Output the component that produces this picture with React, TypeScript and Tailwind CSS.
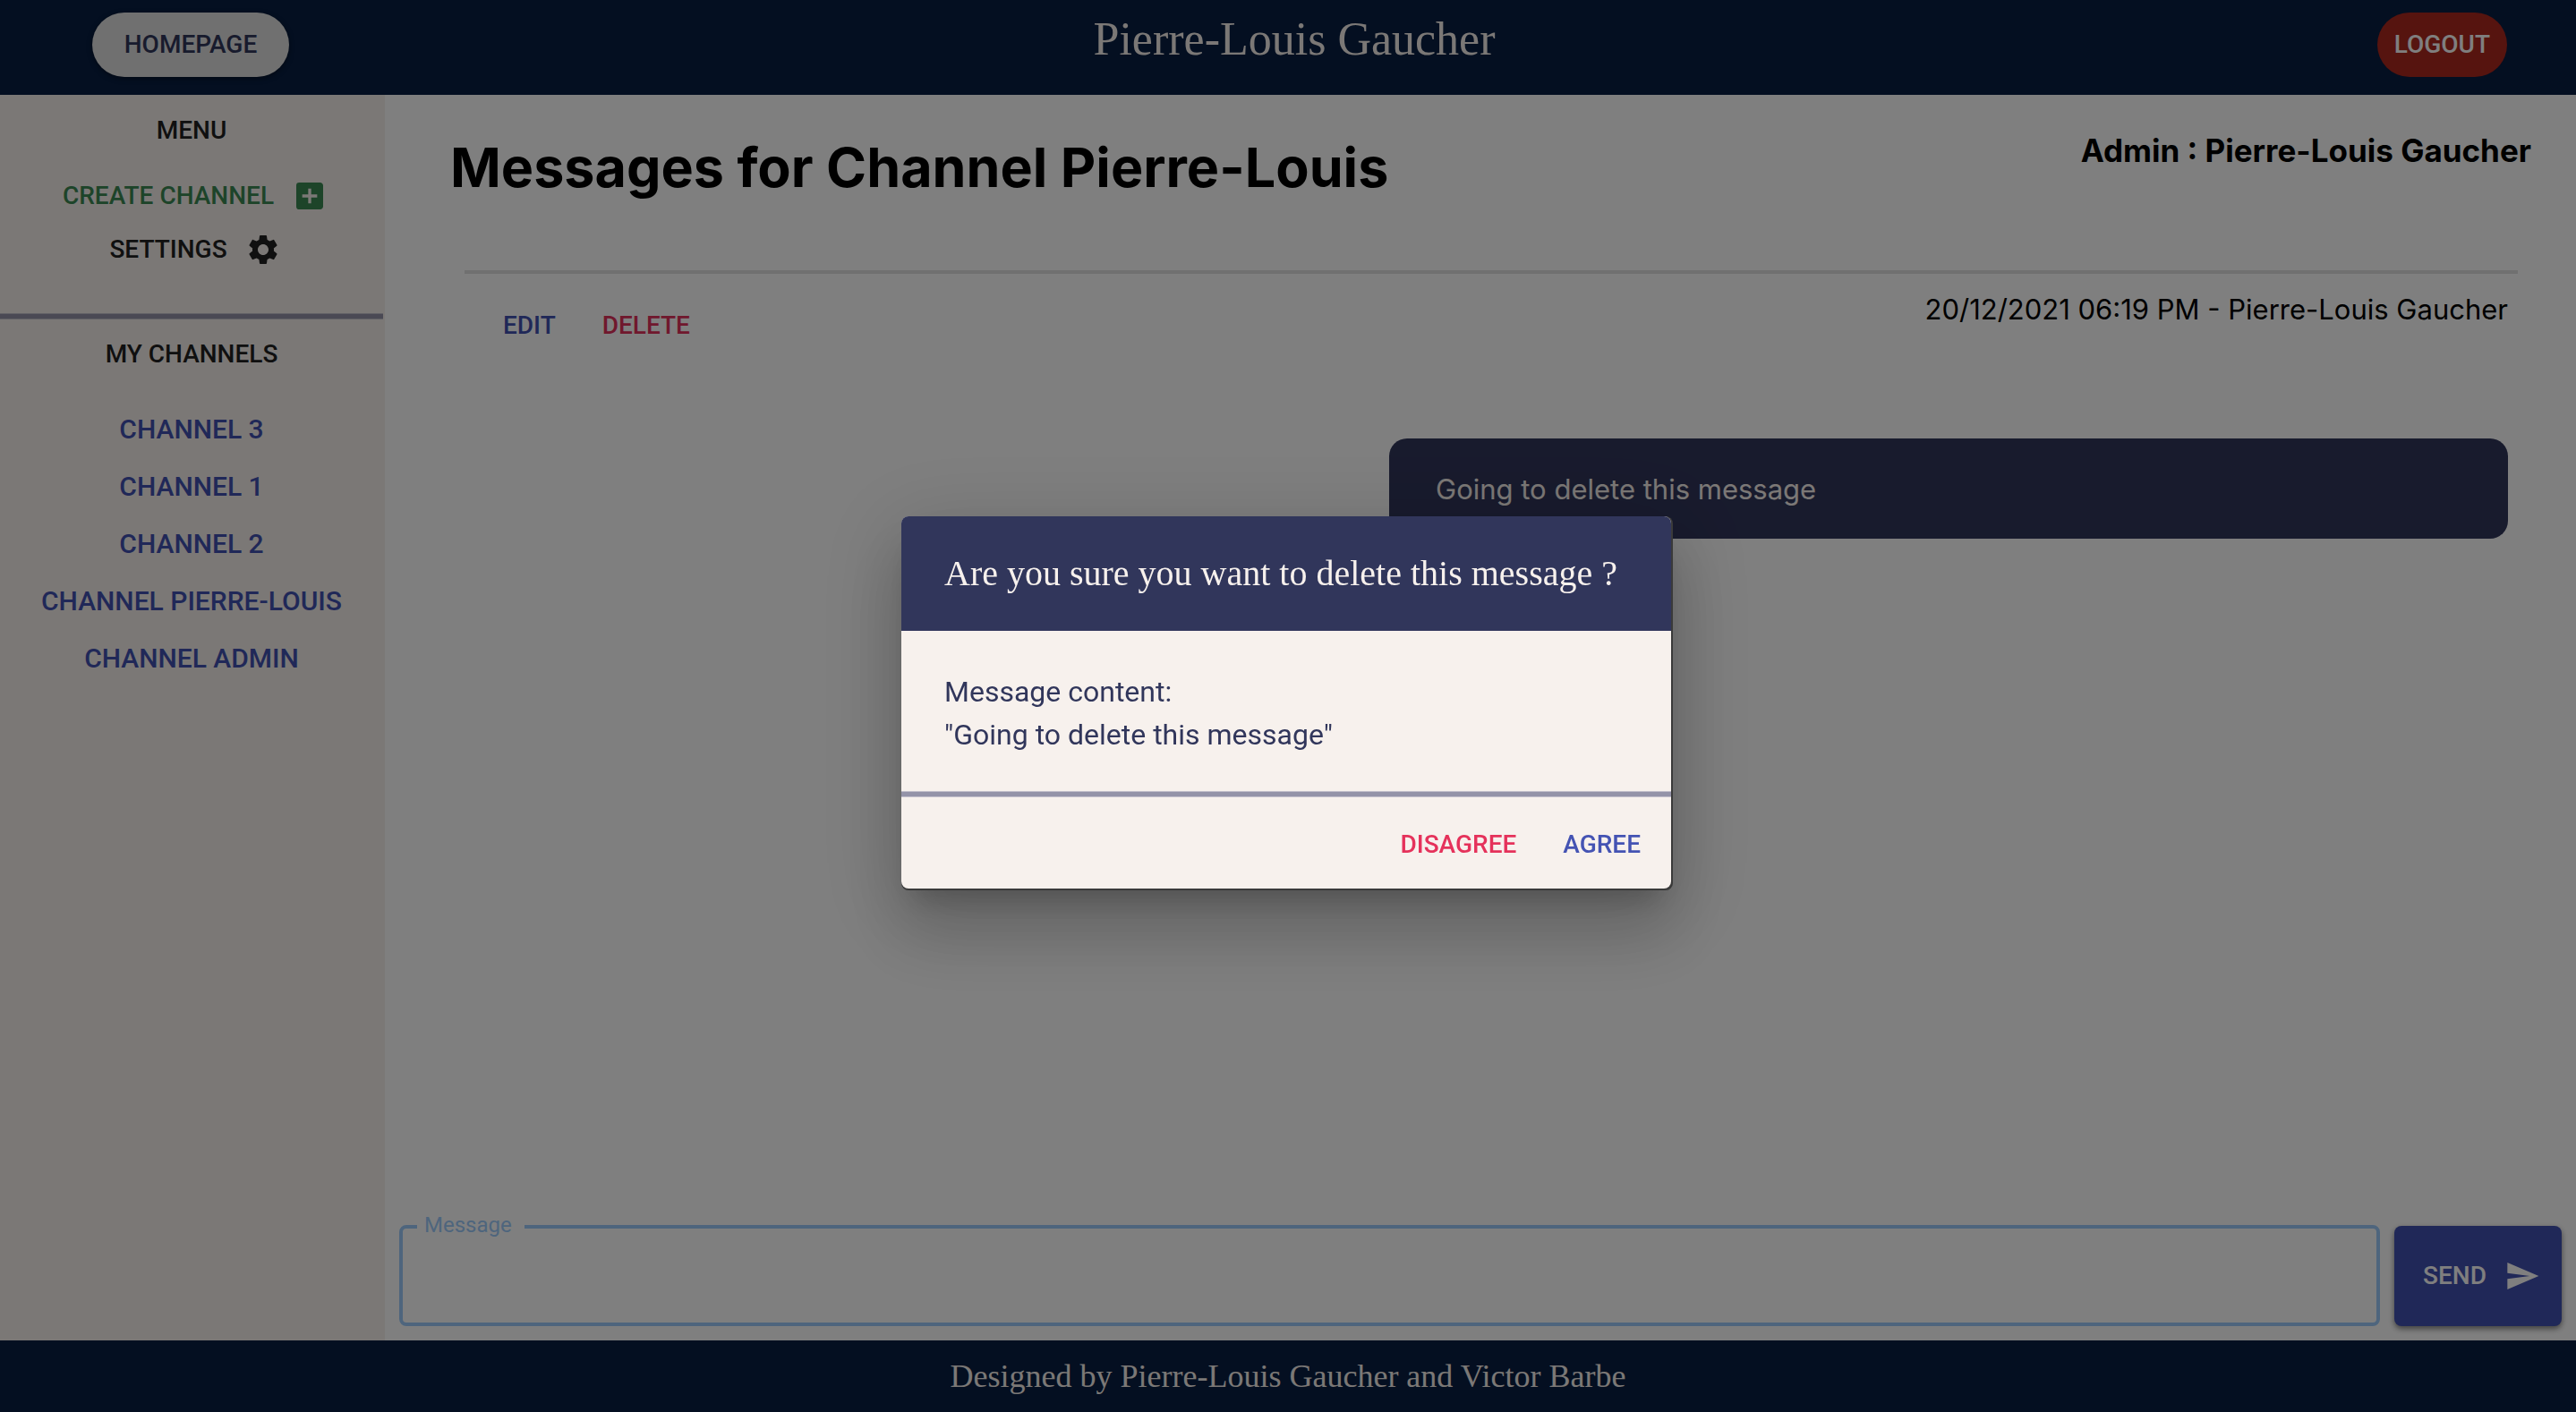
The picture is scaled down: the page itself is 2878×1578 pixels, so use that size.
import React from "react";
import { MdAddBox, MdSend, MdSettings } from "react-icons/md";

const channels = ["Channel 3", "Channel 1", "Channel 2", "Channel Pierre-Louis", "Channel Admin"];

const buttonText = "font-['Roboto',sans-serif] text-[28px] leading-[48px] font-medium uppercase";

function Rule() {
  return <hr className="h-[7px] w-full border-y border-[#c3c0cb] bg-[#9493a8]" />;
}

function Header() {
  return (
    <header className="flex h-[106px] shrink-0 items-start bg-[#081e42]">
      <div className="flex w-[426px] justify-center pt-3.5">
        <button
          type="button"
          className={`${buttonText} rounded-full bg-[#e0e0e0] px-9 py-3 text-[#31365b] shadow-[0_2px_6px_rgba(0,0,0,0.4)]`}
        >
          Homepage
        </button>
      </div>
      <h1 className="flex-1 pt-3.5 text-center font-['Liberation_Serif',serif] text-[52px] leading-[60px] text-[#f7f1ed]">
        Pierre-Louis Gaucher
      </h1>
      <div className="flex w-[412px] justify-end pt-3.5 pr-[77px]">
        <button type="button" className={`${buttonText} rounded-full bg-[#ac281e] px-[19px] py-3 text-white`}>
          Logout
        </button>
      </div>
    </header>
  );
}

function Sidebar() {
  return (
    <aside className="flex w-[430px] shrink-0 flex-col items-center border-r-2 border-[#f7f1ed] bg-[#f7f1ed] text-[#212121]">
      <h2 className={`${buttonText} pt-4 pb-3.5`}>Menu</h2>
      <div className="flex flex-col items-center pt-[5px] pb-[41px]">
        <button type="button" className={`${buttonText} flex h-[60px] items-center gap-5 text-[#3b8853]`}>
          Create channel
          <MdAddBox className="-mr-2 size-10" aria-hidden />
        </button>
        <button type="button" className={`${buttonText} flex h-[60px] items-center gap-5`}>
          Settings
          <MdSettings className="-mr-2 size-10" aria-hidden />
        </button>
      </div>
      <Rule />
      <h2 className={`${buttonText} pt-[15px] pb-[13px]`}>My channels</h2>
      <nav className="flex flex-col items-center pt-[15px]">
        {channels.map((name) => (
          <a
            key={name}
            href="#"
            className="font-['Roboto',sans-serif] text-[30px] leading-[64px] font-medium text-[#4150b0] uppercase"
          >
            {name}
          </a>
        ))}
      </nav>
    </aside>
  );
}

function Message() {
  return (
    <article className="flex justify-between pr-[76px] pl-[132px] font-['Inter',sans-serif] text-[31px] leading-[40px]">
      <div className="flex items-start gap-[52px] pt-[34px]">
        <button type="button" className={`${buttonText} text-[#4150b0]`}>
          Edit
        </button>
        <button type="button" className={`${buttonText} text-[#e0315a]`}>
          Delete
        </button>
      </div>
      <div className="flex w-[1250px] flex-col pt-5">
        <p className="text-right">20/12/2021 06:19 PM - Pierre-Louis Gaucher</p>
        <p className="mt-[124px] rounded-[20px] bg-[#31365b] px-[52px] pt-[37px] pb-[35px] text-[#f7f1ed]">
          Going to delete this message
        </p>
      </div>
    </article>
  );
}

function Composer() {
  return (
    <form className="flex gap-4 p-4">
      <div className="relative flex-1">
        <label
          htmlFor="message"
          className="absolute -top-4 left-5 bg-white pr-3.5 pl-2 font-['Roboto',sans-serif] text-[24px] leading-[32px] text-[#9ccbfb]"
        >
          Message
        </label>
        <input
          id="message"
          type="text"
          className="h-[113px] w-full rounded-lg border-4 border-[#9ccbfb] px-7 font-['Roboto',sans-serif] text-[32px] outline-none"
        />
      </div>
      <button
        type="button"
        className={`${buttonText} mt-px flex items-center gap-5 rounded-lg bg-[#4150b0] pr-6 pl-8 text-white shadow-[0_3px_6px_rgba(0,0,0,0.5)]`}
      >
        Send
        <MdSend className="size-10" aria-hidden />
      </button>
    </form>
  );
}

function DeleteDialog() {
  return (
    <div className="fixed inset-0 flex items-center justify-center bg-black/50 pr-0.5 pb-1.5">
      <div
        role="dialog"
        aria-modal="true"
        aria-labelledby="dialog-title"
        className="w-[862px] max-w-full rounded-lg bg-[#3a3a3a] pr-0.5 pb-0.5 shadow-[0_22px_30px_-14px_rgba(0,0,0,0.2),0_48px_76px_6px_rgba(0,0,0,0.14),0_18px_92px_16px_rgba(0,0,0,0.12)]"
      >
        <div className="overflow-hidden rounded-lg bg-[#f7f1ed]">
          <h2
            id="dialog-title"
            className="bg-[#31365b] px-12 py-8 font-['Liberation_Serif',serif] text-[40px] leading-[64px] whitespace-nowrap text-[#f7f1ed]"
          >
            Are you sure you want to delete this message ?
          </h2>
          <p className="px-12 pt-11 pb-[39px] font-['Roboto',sans-serif] text-[32px] leading-[48px] text-[#31365b]">
            Message content:
            <br />
            "Going to delete this message"
          </p>
          <Rule />
          <div className="flex justify-end gap-[52px] px-[34px] pt-[29px] pb-[25px]">
            <button type="button" className={`${buttonText} text-[#e5325b]`}>
              Disagree
            </button>
            <button type="button" className={`${buttonText} text-[#4453b3]`}>
              Agree
            </button>
          </div>
        </div>
      </div>
    </div>
  );
}

export default function App() {
  return (
    <div className="flex min-h-screen flex-col bg-white text-black">
      <Header />
      <div className="flex flex-1">
        <Sidebar />
        <main className="flex flex-1 flex-col">
          <div className="flex items-start justify-between pr-[50px] pl-[73px] font-['Inter',sans-serif] font-bold">
            <h2 className="pt-[41px] text-[61px] leading-[80px]">Messages for Channel Pierre-Louis</h2>
            <h3 className="pt-10 text-[35px] leading-[44px]">Admin : Pierre-Louis Gaucher</h3>
          </div>
          <hr className="mt-[75px] mr-[65px] ml-[89px] h-1 border-0 bg-[#e1e1e1]" />
          <Message />
          <div className="mt-auto">
            <Composer />
          </div>
        </main>
      </div>
      <footer className="h-20 shrink-0 bg-[#081e42] text-center font-['Liberation_Serif',serif] text-[36px] leading-[80px] text-[#f7f1ed]">
        Designed by Pierre-Louis Gaucher and Victor Barbe
      </footer>
      <DeleteDialog />
    </div>
  );
}
